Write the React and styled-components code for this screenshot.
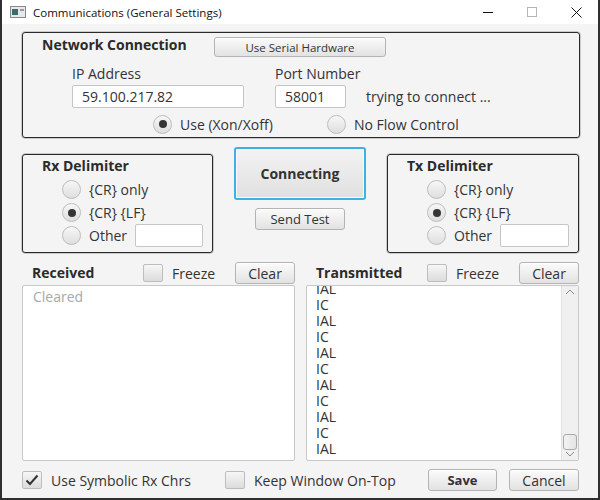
import styled, { createGlobalStyle } from 'styled-components'

const Global = createGlobalStyle`
  html, body {
    margin: 0;
    padding: 0;
    background: #ffffff;
  }
  * {
    box-sizing: border-box;
  }
`

const Window = styled.div`
  width: 600px;
  height: 500px;
  display: flex;
  flex-direction: column;
  border: 2px solid #2f2f2f;
  border-top: none;
  font-family: 'Open Sans', 'Liberation Sans', sans-serif;
  font-size: 14px;
  color: #333;
  overflow: hidden;
`

const TitleBar = styled.div`
  height: 24px;
  flex: none;
  display: flex;
  align-items: center;
  background: #ffffff;
  padding-left: 8px;
`

const TitleText = styled.span`
  margin-left: 7px;
  font-size: 11.5px;
  color: #111;
`

const WinControls = styled.div`
  margin-left: auto;
  display: flex;
  height: 100%;
`

const WinButton = styled.div`
  width: 44px;
  height: 100%;
  display: flex;
  align-items: center;
  justify-content: center;
`

const Content = styled.div`
  flex: 1;
  background: #f4f4f4;
  padding: 8px 18px 0 20px;
  display: flex;
  flex-direction: column;
`

const GroupBox = styled.div`
  border: 1px solid #2a2a2a;
  border-radius: 3px;
  box-shadow: 0 0 0 0.5px rgba(0, 0, 0, 0.35);
  height: ${p => p.$h}px;
  display: flex;
  flex-direction: column;
`

const BoxTitle = styled.div`
  font-weight: 700;
  font-size: 14px;
  line-height: 16px;
  color: #2b2b2b;
  white-space: nowrap;
`

const NetHeader = styled.div`
  display: flex;
  padding: 4px 0 0 19px;
  height: 24px;
  ${BoxTitle} {
    width: 172px;
  }
`

const Button = styled.button`
  font-family: inherit;
  font-size: ${p => p.$fs || 14}px;
  font-weight: ${p => (p.$bold ? 700 : 400)};
  color: #333;
  width: ${p => p.$w}px;
  height: ${p => p.$h || 22}px;
  padding: 0;
  border: 1px solid #b4b4b4;
  border-radius: 3px;
  background: linear-gradient(#fbfbfb, #e2e2e2);
  box-shadow: inset 0 1px 0 #ffffff;
  white-space: nowrap;
  cursor: default;
`

const ConnectButton = styled(Button)`
  border: 2px solid #3fb0e4;
  background: linear-gradient(#f3f3f3, #e0e0e0);
  box-shadow: inset 0 0 0 1px #fafafa;
`

const FieldsRow = styled.div`
  display: flex;
  padding-left: 49px;
  margin-top: 9px;
`

const FieldCol = styled.div`
  display: flex;
  flex-direction: column;
  width: ${p => p.$w}px;
  margin-right: ${p => p.$mr || 0}px;
`

const FieldLabel = styled.div`
  line-height: 16px;
  white-space: nowrap;
  color: #333;
`

const TextField = styled.div`
  width: ${p => p.$w}px;
  height: 23px;
  margin-top: ${p => p.$mt || 0}px;
  background: #fff;
  border: 1px solid #c6c6c6;
  border-radius: 2px;
  padding-left: 9px;
  line-height: 21px;
  font-size: 14px;
  color: #333;
`

const Status = styled.div`
  align-self: flex-end;
  line-height: 23px;
  margin-left: 20px;
  white-space: nowrap;
`

const RadioRow = styled.div`
  display: grid;
  grid-template-columns: 174px auto;
  padding-left: 130px;
  margin-top: 6px;
  height: 20px;
`

const RadioItem = styled.div`
  display: flex;
  align-items: center;
  height: ${p => p.$h || 20}px;
  gap: 8px;
  white-space: nowrap;
`

const RadioCircle = styled.span`
  width: 19px;
  height: 19px;
  border-radius: 50%;
  border: 1px solid #bdbdbd;
  background: linear-gradient(#f7f7f7, #dedede);
  display: flex;
  align-items: center;
  justify-content: center;
  flex: none;
  &::after {
    content: '';
    width: 8px;
    height: 8px;
    border-radius: 50%;
    background: #353535;
    display: ${p => (p.$on ? 'block' : 'none')};
  }
`

const MiddleRow = styled.div`
  display: grid;
  grid-template-columns: 191px 1fr 192px;
  margin-top: 9px;
  margin-right: 1px;
  height: 106px;
  ${GroupBox} {
    margin-top: 7px;
  }
`

const DelimTitle = styled(BoxTitle)`
  padding: 3px 0 0 19px;
`

const RadioList = styled.div`
  display: flex;
  flex-direction: column;
  padding: 4px 9px 0 39px;
`

const OtherField = styled(TextField)`
  margin-left: auto;
`

const CenterCol = styled.div`
  display: flex;
  flex-direction: column;
  align-items: center;
  gap: 8px;
`

const LogGrid = styled.div`
  display: grid;
  grid-template-columns: 273px 273px;
  column-gap: 11px;
  margin-top: 9px;
`

const LogPane = styled.div`
  display: flex;
  flex-direction: column;
`

const LogHeader = styled.div`
  display: flex;
  align-items: flex-start;
  height: 23px;
  padding-left: 10px;
`

const LogTitle = styled(BoxTitle)`
  width: 111px;
  line-height: 22px;
`

const CheckItem = styled.div`
  display: flex;
  align-items: center;
  gap: 9px;
  height: 22px;
  white-space: nowrap;
  width: ${p => (p.$w ? `${p.$w}px` : 'auto')};
`

const CheckBox = styled.span`
  width: 20px;
  height: 18px;
  border: 1px solid #bdbdbd;
  border-radius: 2px;
  background: linear-gradient(#f6f6f6, #dcdcdc);
  display: flex;
  align-items: center;
  justify-content: center;
  flex: none;
`

const ClearSlot = styled.div`
  margin-left: auto;
`

const TextArea = styled.div`
  position: relative;
  height: 176px;
  background: #fff;
  border: 1px solid #c8c8c8;
  border-radius: 2px;
  overflow: hidden;
`

const Placeholder = styled.div`
  padding: 3px 10px;
  line-height: 16px;
  color: #a8a8a8;
`

const Lines = styled.div`
  margin-top: -5px;
  padding-left: 9px;
  line-height: 16px;
  color: #333;
`

const ScrollBar = styled.div`
  position: absolute;
  top: 0;
  right: 0;
  bottom: 0;
  width: 17px;
  background: #f0f0f0;
  border-left: 1px solid #e2e2e2;
  display: flex;
  flex-direction: column;
  align-items: center;
  padding: 3px 0 3px;
`

const Thumb = styled.div`
  width: 14px;
  height: 16px;
  border: 1px solid #a9a9a9;
  border-radius: 3px;
  background: linear-gradient(90deg, #f3f3f3, #e4e4e4);
  margin-top: auto;
  margin-bottom: 1px;
`

const BottomRow = styled.div`
  display: flex;
  align-items: center;
  height: 22px;
  margin-top: 8px;
  margin-right: 1px;
`

const ButtonGroup = styled.div`
  margin-left: auto;
  display: flex;
  gap: 12px;
`

function Radio({ on, children, h }) {
  return (
    <RadioItem $h={h}>
      <RadioCircle $on={on} />
      <span>{children}</span>
    </RadioItem>
  )
}

function Check({ on, children, w }) {
  return (
    <CheckItem $w={w}>
      <CheckBox>
        {on && (
          <svg width="14" height="12" viewBox="0 0 14 12">
            <path d="M1.5 6.5 L5 10 L12.5 1.5" fill="none" stroke="#333" strokeWidth="2" />
          </svg>
        )}
      </CheckBox>
      <span>{children}</span>
    </CheckItem>
  )
}

function Delimiter({ title }) {
  return (
    <GroupBox $h={99}>
      <DelimTitle>{title}</DelimTitle>
      <RadioList>
        <Radio h={23}>{'{CR} only'}</Radio>
        <Radio h={23} on>{'{CR} {LF}'}</Radio>
        <RadioItem $h={23}>
          <RadioCircle />
          <span>Other</span>
          <OtherField $w={70} />
        </RadioItem>
      </RadioList>
    </GroupBox>
  )
}

const txLines = ['IAL', 'IC', 'IAL', 'IC', 'IAL', 'IC', 'IAL', 'IC', 'IAL', 'IC', 'IAL']

export default function App() {
  return (
    <>
      <Global />
      <Window>
        <TitleBar>
          <svg width="16" height="12" viewBox="0 0 16 12">
            <rect x="0.5" y="0.5" width="15" height="11" fill="#e8e8e8" stroke="#8a8a8a" />
            <rect x="2" y="3" width="6" height="6" fill="#3d6d6a" />
            <rect x="10" y="3" width="4" height="2" fill="#9a9a9a" />
          </svg>
          <TitleText>Communications (General Settings)</TitleText>
          <WinControls>
            <WinButton>
              <svg width="10" height="10" viewBox="0 0 10 10">
                <path d="M0 5.5 H10" stroke="#111" strokeWidth="1" />
              </svg>
            </WinButton>
            <WinButton>
              <svg width="10" height="10" viewBox="0 0 10 10">
                <rect x="0.5" y="0.5" width="9" height="9" fill="none" stroke="#b5b5b5" />
              </svg>
            </WinButton>
            <WinButton>
              <svg width="11" height="11" viewBox="0 0 11 11">
                <path d="M0.5 0.5 L10.5 10.5 M10.5 0.5 L0.5 10.5" stroke="#111" strokeWidth="1" />
              </svg>
            </WinButton>
          </WinControls>
        </TitleBar>
        <Content>
          <GroupBox $h={106}>
            <NetHeader>
              <BoxTitle>Network Connection</BoxTitle>
              <Button $w={172} $h={20} $fs={11.5}>Use Serial Hardware</Button>
            </NetHeader>
            <FieldsRow>
              <FieldCol $w={172} $mr={31}>
                <FieldLabel>IP Address</FieldLabel>
                <TextField $w={172} $mt={3}>59.100.217.82</TextField>
              </FieldCol>
              <FieldCol $w={71}>
                <FieldLabel>Port Number</FieldLabel>
                <TextField $w={71} $mt={3}>58001</TextField>
              </FieldCol>
              <Status>trying to connect ...</Status>
            </FieldsRow>
            <RadioRow>
              <Radio on>Use (Xon/Xoff)</Radio>
              <Radio>No Flow Control</Radio>
            </RadioRow>
          </GroupBox>

          <MiddleRow>
            <Delimiter title="Rx Delimiter" />
            <CenterCol>
              <ConnectButton $w={132} $h={53} $bold>Connecting</ConnectButton>
              <Button $w={90} $h={22} $fs={13}>Send Test</Button>
            </CenterCol>
            <Delimiter title="Tx Delimiter" />
          </MiddleRow>

          <LogGrid>
            <LogPane>
              <LogHeader>
                <LogTitle>Received</LogTitle>
                <Check>Freeze</Check>
                <ClearSlot>
                  <Button $w={60} $h={22}>Clear</Button>
                </ClearSlot>
              </LogHeader>
              <TextArea>
                <Placeholder>Cleared</Placeholder>
              </TextArea>
            </LogPane>
            <LogPane>
              <LogHeader>
                <LogTitle>Transmitted</LogTitle>
                <Check>Freeze</Check>
                <ClearSlot>
                  <Button $w={60} $h={22}>Clear</Button>
                </ClearSlot>
              </LogHeader>
              <TextArea>
                <Lines>
                  {txLines.map((l, i) => (
                    <div key={i}>{l}</div>
                  ))}
                </Lines>
                <ScrollBar>
                  <svg width="10" height="6" viewBox="0 0 10 6">
                    <path d="M1 5 L5 1 L9 5" fill="none" stroke="#8c8c8c" strokeWidth="1" />
                  </svg>
                  <Thumb />
                  <svg width="10" height="6" viewBox="0 0 10 6">
                    <path d="M1 1 L5 5 L9 1" fill="none" stroke="#8c8c8c" strokeWidth="1" />
                  </svg>
                </ScrollBar>
              </TextArea>
            </LogPane>
          </LogGrid>

          <BottomRow>
            <Check on w={203}>Use Symbolic Rx Chrs</Check>
            <Check>Keep Window On-Top</Check>
            <ButtonGroup>
              <Button $w={69} $h={22} $fs={13} $bold>Save</Button>
              <Button $w={70} $h={22}>Cancel</Button>
            </ButtonGroup>
          </BottomRow>
        </Content>
      </Window>
    </>
  )
}
